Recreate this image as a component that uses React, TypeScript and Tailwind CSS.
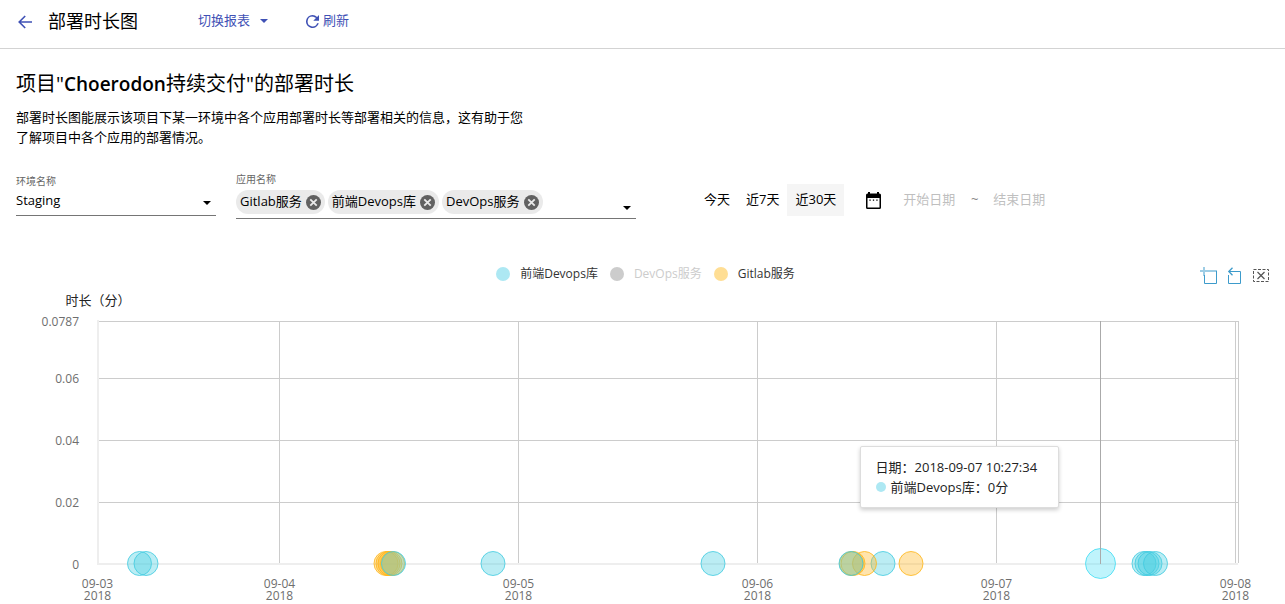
import { useState } from "react";

type Series = "devops" | "gitlab" | "hover";

const PLOT_WIDTH = 1140;
const AXIS_Y = 273.5;

const pct = (value: number) => `${(value / PLOT_WIDTH) * 100}%`;

const seriesStyle: Record<Series, { fill: string; stroke: string; r: number }> = {
  devops: { fill: "#4dcfe3", stroke: "#3fcbe0", r: 12 },
  gitlab: { fill: "#ffb828", stroke: "#ffb515", r: 12 },
  hover: { fill: "#57e2f6", stroke: "#3fdcf2", r: 15 },
};

const points: { x: number; series: Series }[] = [
  { x: 41.5, series: "devops" },
  { x: 48, series: "devops" },
  { x: 395, series: "devops" },
  { x: 615, series: "devops" },
  { x: 785, series: "devops" },
  { x: 1046, series: "devops" },
  { x: 1049, series: "devops" },
  { x: 1052, series: "devops" },
  { x: 1057.5, series: "devops" },
  { x: 288, series: "gitlab" },
  { x: 290, series: "gitlab" },
  { x: 292, series: "gitlab" },
  { x: 294.5, series: "gitlab" },
  { x: 753.5, series: "gitlab" },
  { x: 755, series: "gitlab" },
  { x: 766.5, series: "gitlab" },
  { x: 813, series: "gitlab" },
  { x: 295.5, series: "devops" },
  { x: 753, series: "devops" },
  { x: 1002.5, series: "hover" },
];

const yTicks = [
  { label: "0.0787", y: 31.5 },
  { label: "0.06", y: 88.5 },
  { label: "0.04", y: 150.5 },
  { label: "0.02", y: 212.5 },
  { label: "0", y: 274.5 },
];

const xTicks = [
  { label: "09-03", x: -0.5 },
  { label: "09-04", x: 181.5 },
  { label: "09-05", x: 420.5 },
  { label: "09-06", x: 659.5 },
  { label: "09-07", x: 898.5 },
  { label: "09-08", x: 1137.5 },
];

const legend = [
  { label: "前端Devops库", dot: "bg-[#ade8f3]", text: "text-[#333]", on: true },
  { label: "DevOps服务", dot: "bg-[#ccc]", text: "text-[#ccc]", on: false },
  { label: "Gitlab服务", dot: "bg-[#ffde94]", text: "text-[#333]", on: true },
];

function Caret({ className = "" }: { className?: string }) {
  return (
    <svg viewBox="0 0 8 4" className={`h-1 w-2 ${className}`} fill="currentColor" aria-hidden="true">
      <path d="M0 0h8L4 4z" />
    </svg>
  );
}

function Header() {
  return (
    <header className="flex h-[49px] items-center border-b border-[#d3d3d3] pb-[6px] pl-[18px] text-[13px] text-[#3f51b5]">
      <button type="button" aria-label="返回" className="mt-[2px]">
        <svg viewBox="0 0 14 14" className="size-[14px]" fill="none" stroke="currentColor" strokeWidth="1.6">
          <path d="M14 7H1.5M7.2 1 1.2 7l6 6" />
        </svg>
      </button>
      <h1 className="ml-4 text-lg text-black">部署时长图</h1>
      <button type="button" aria-haspopup="menu" className="ml-[60px] flex items-center gap-[10px]">
        切换报表
        <Caret />
      </button>
      <button type="button" className="ml-[38px] flex items-center gap-1">
        <svg viewBox="4 4 16 16" className="size-[13px]" fill="currentColor" aria-hidden="true">
          <path d="M17.65 6.35A7.96 7.96 0 0 0 12 4a8 8 0 1 0 7.73 10h-2.08A6 6 0 1 1 12 6c1.66 0 3.14.69 4.22 1.78L13 11h7V4z" />
        </svg>
        刷新
      </button>
    </header>
  );
}

function Chip({ label, onRemove }: { label: string; onRemove: () => void }) {
  return (
    <li className="flex h-6 items-center gap-1 rounded-full bg-[#eaeaea] px-1">
      {label}
      <button type="button" aria-label={`移除${label}`} onClick={onRemove}>
        <svg viewBox="2 2 20 20" className="size-[15px]" fill="#616161" aria-hidden="true">
          <circle cx="12" cy="12" r="10" />
          <path d="m7.700 7.700 8.600 8.600M16.300 7.700l-8.600 8.600" stroke="#eaeaea" strokeWidth="2.4" />
        </svg>
      </button>
    </li>
  );
}

function Filters() {
  const [apps, setApps] = useState(["Gitlab服务", "前端Devops库", "DevOps服务"]);
  const [range, setRange] = useState("近30天");

  return (
    <div className="mt-[25px] flex items-start text-[13px] text-black">
      <div className="w-[200px] pt-[2px]">
        <label htmlFor="env" className="block text-[10px] leading-[14px] text-[#666]">
          环境名称
        </label>
        <div className="relative">
          <select id="env" className="block h-7 w-full appearance-none border-b border-[#757575] bg-transparent pb-px outline-none">
            <option>Staging</option>
          </select>
          <Caret className="pointer-events-none absolute top-[13px] right-[5px]" />
        </div>
      </div>

      <div className="ml-5 w-[400px]">
        <span id="app-label" className="block text-[10px] leading-[14px] text-[#666]">
          应用名称
        </span>
        <div className="flex items-center border-b border-[#757575] py-1">
          <ul aria-labelledby="app-label" className="flex grow gap-[3px]">
            {apps.map((app) => (
              <Chip key={app} label={app} onRemove={() => setApps(apps.filter((a) => a !== app))} />
            ))}
          </ul>
          <button type="button" aria-label="选择应用" className="mt-3 mr-[5px]">
            <Caret />
          </button>
        </div>
      </div>

      <div className="mt-3 ml-[60px] flex h-8 items-center">
        {["今天", "近7天", "近30天"].map((item) => (
          <button
            key={item}
            type="button"
            aria-pressed={range === item}
            onClick={() => setRange(item)}
            className={`h-8 px-2 ${range === item ? "bg-[#f5f5f5]" : ""}`}
          >
            {item}
          </button>
        ))}
        <svg viewBox="0 0 15 17" className="ml-[22px] h-[17px] w-[15px]" aria-hidden="true">
          <path
            fillRule="evenodd"
            d="M2 0h2v1.500h7V0h2v1.500h.5A1.500 1.500 0 0 1 15 3v12.500a1.500 1.500 0 0 1-1.500 1.500h-12A1.500 1.500 0 0 1 0 15.500V3a1.500 1.500 0 0 1 1.500-1.500H2zM1.500 6v9.500h12V6z"
          />
          <path d="M3.400 7.500h1.300v1.300H3.400zm3.450 0h1.300v1.300h-1.300zm3.450 0h1.300v1.300h-1.300z" />
        </svg>
        <input aria-label="开始日期" placeholder="开始日期" className="ml-[22px] w-[53px] outline-none placeholder:text-[#bfbfbf]" />
        <span className="w-[37px] text-center text-[#888]">~</span>
        <input aria-label="结束日期" placeholder="结束日期" className="w-[53px] outline-none placeholder:text-[#bfbfbf]" />
      </div>
    </div>
  );
}

function ChartToolbar() {
  return (
    <div className="mt-px flex gap-[10px] justify-self-end">
      <button type="button" aria-label="区域缩放">
        <svg viewBox="0 0 17 17" className="size-[17px]" fill="none" stroke="#3d9bcb">
          <path d="M0 4h17M4 0v9" strokeWidth="2" strokeOpacity=".5" />
          <path d="M4.500 8v8.500h12V4" />
        </svg>
      </button>
      <button type="button" aria-label="区域缩放还原">
        <svg viewBox="0 0 16 17" className="h-[17px] w-4" fill="none" stroke="#3d9bcb">
          <path d="M1.500 8v8.500h12V4.500H2" />
          <path d="M5.500.8 1.800 4.500l3.700 3.700" strokeWidth="1.300" />
        </svg>
      </button>
      <button type="button" aria-label="关闭缩放">
        <svg viewBox="0 0 16 17" className="h-[17px] w-4" fill="none" stroke="#555">
          <path d="M.5 2.500h15v12H.5z" strokeDasharray="3 1.500" />
          <path d="m4.500 5 7 7M11.500 5l-7 7" strokeWidth="1.200" />
        </svg>
      </button>
    </div>
  );
}

function Chart() {
  return (
    <section aria-label="部署时长" className="mt-[47px]">
      <div className="grid h-6 grid-cols-[1fr_auto_1fr] items-start">
        <span />
        <div className="flex gap-3 pl-[6px]">
          {legend.map((item) => (
            <button
              key={item.label}
              type="button"
              aria-pressed={item.on}
              className={`flex h-4 items-center gap-[10px] text-xs ${item.text}`}
            >
              <span className={`size-[14px] rounded-full ${item.dot}`} />
              {item.label}
            </button>
          ))}
        </div>
        <ChartToolbar />
      </div>

      <div className="relative mr-[31px] ml-[82px]">
        <svg className="block h-[313px] w-full overflow-visible" fontSize="12" fill="#6e6e6e">
          <text x="0" y="15" textAnchor="middle" fontSize="13" fill="#222">
            时长（分）
          </text>

          <g stroke="#ccc" shapeRendering="crispEdges">
            {yTicks.slice(0, 4).map((t) => (
              <line key={t.label} x1="1" x2="100%" y1={t.y} y2={t.y} />
            ))}
            {xTicks.slice(1).map((t) => (
              <line key={t.label} x1={pct(t.x)} x2={pct(t.x)} y1="31" y2="273" />
            ))}
            <line x1={pct(1140.5)} x2={pct(1140.5)} y1="31" y2="273" />
          </g>
          <g stroke="#eee" strokeWidth="2" shapeRendering="crispEdges">
            <line x1="0" x2="0" y1="30" y2="275" />
            <line x1="-1" x2="100%" y1="274" y2="274" />
          </g>

          {yTicks.map((t) => (
            <text key={t.label} x="-19" y={t.y + 4.5} textAnchor="end">
              {t.label}
            </text>
          ))}
          {xTicks.map((t) => (
            <g key={t.label} textAnchor="middle">
              <text x={pct(t.x)} y="298">
                {t.label}
              </text>
              <text x={pct(t.x)} y="310">
                2018
              </text>
            </g>
          ))}

          {points.map((p) => {
            const s = seriesStyle[p.series];
            return (
              <circle
                key={`${p.series}-${p.x}`}
                cx={pct(p.x)}
                cy={AXIS_Y}
                r={s.r}
                fill={s.fill}
                fillOpacity="0.38"
                stroke={s.stroke}
                strokeOpacity="0.8"
              />
            );
          })}
          <line x1={pct(1002.5)} x2={pct(1002.5)} y1="31" y2="274" stroke="#aaa" shapeRendering="crispEdges" />
        </svg>

        <div
          role="tooltip"
          className="absolute top-[156px] left-[66.8%] min-w-[199px] rounded-xs border border-[#ddd] bg-white px-[15px] py-[10px] text-[13px] leading-5 whitespace-nowrap text-[#222] shadow-[0_2px_4px_rgba(0,0,0,0.2)]"
        >
          <div>日期：2018-09-07 10:27:34</div>
          <div className="flex items-center gap-[5px]">
            <span className="size-[10px] rounded-full bg-[#ade8f3]" />
            前端Devops库：0分
          </div>
        </div>
      </div>
    </section>
  );
}

export default function App() {
  return (
    <div className="bg-white font-['Open_Sans','Noto_Sans_CJK_SC',sans-serif]">
      <Header />
      <main className="px-4 pt-[21px]">
        <h2 className="text-xl leading-7 text-black">
          项目"<span className="text-[19px] font-semibold">Choerodon</span>持续交付"的部署时长
        </h2>
        <p className="mt-[9px] max-w-[512px] text-[13px] leading-5 text-black">
          部署时长图能展示该项目下某一环境中各个应用部署时长等部署相关的信息，这有助于您了解项目中各个应用的部署情况。
        </p>
        <Filters />
        <Chart />
      </main>
    </div>
  );
}
